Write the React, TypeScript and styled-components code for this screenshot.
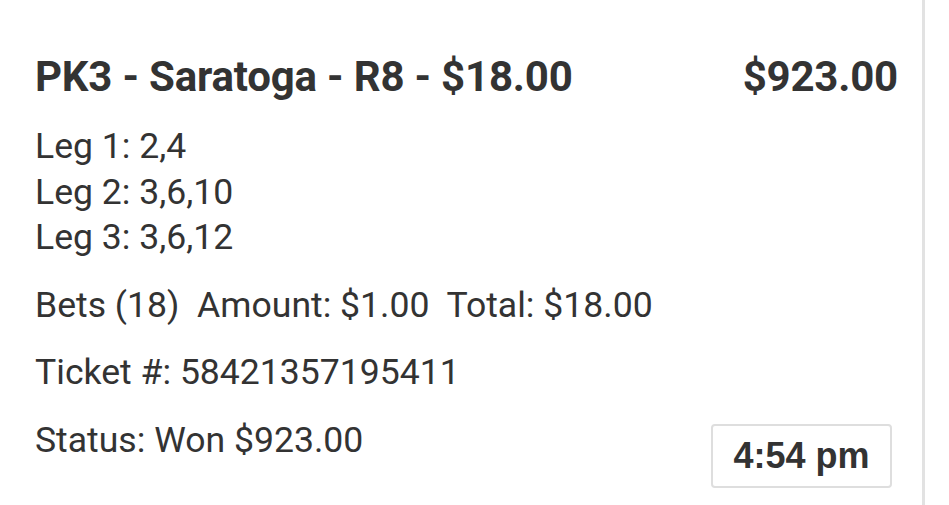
import styled, { createGlobalStyle } from "styled-components";

const GlobalStyle = createGlobalStyle`
  body {
    margin: 0;
    background: #ffffff;
    font-family: Roboto, "Liberation Sans", sans-serif;
    color: #333333;
  }
`;

const Card = styled.div`
  box-sizing: border-box;
  width: 925px;
  min-height: 505px;
  padding: 53px 24px 0 35px;
  border-right: 3px solid #e2e2e2;
  display: flex;
  flex-direction: column;
  gap: 22px;
`;

const Header = styled.div`
  display: flex;
  justify-content: space-between;
  align-items: baseline;
  margin-bottom: 1px;
`;

const Title = styled.h2`
  margin: 0;
  font-size: 42px;
  font-weight: 700;
  line-height: 48px;
  letter-spacing: -0.2px;
  color: #333333;
`;

const Legs = styled.div`
  display: flex;
  flex-direction: column;
`;

const Line = styled.div`
  font-size: 35.6px;
  line-height: 45.5px;
  white-space: pre;
`;

const Footer = styled.div`
  display: flex;
  justify-content: space-between;
  align-items: flex-start;
`;

const TimeBox = styled.div`
  box-sizing: border-box;
  margin-top: 6px;
  margin-right: 6px;
  padding: 0 20.5px;
  height: 64px;
  display: flex;
  align-items: center;
  border: 2px solid #dedede;
  border-radius: 4px;
  font-family: "Liberation Sans", Arial, sans-serif;
  font-weight: 700;
  font-size: 36px;
  color: #333333;
`;

const ticket = {
  title: "PK3 - Saratoga - R8 - $18.00",
  payout: "$923.00",
  legs: ["2,4", "3,6,10", "3,6,12"],
  bets: 18,
  amount: "$1.00",
  total: "$18.00",
  number: "58421357195411",
  status: "Won $923.00",
  time: "4:54 pm",
};

export default function App() {
  return (
    <>
      <GlobalStyle />
      <Card>
        <Header>
          <Title>{ticket.title}</Title>
          <Title>{ticket.payout}</Title>
        </Header>
        <Legs>
          {ticket.legs.map((leg, i) => (
            <Line key={i}>
              Leg {i + 1}: {leg}
            </Line>
          ))}
        </Legs>
        <Line>
          {`Bets (${ticket.bets})  Amount: ${ticket.amount}  Total: ${ticket.total}`}
        </Line>
        <Line>Ticket #: {ticket.number}</Line>
        <Footer>
          <Line>Status: {ticket.status}</Line>
          <TimeBox>{ticket.time}</TimeBox>
        </Footer>
      </Card>
    </>
  );
}
